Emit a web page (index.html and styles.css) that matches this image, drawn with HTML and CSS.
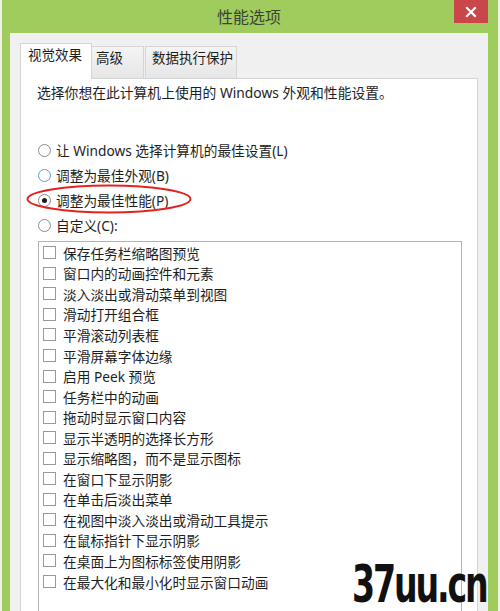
FILE: index.html
```html
<!DOCTYPE html>
<html lang="zh-CN">
<head>
<meta charset="utf-8">
<title>性能选项</title>
<link rel="stylesheet" href="styles.css">
</head>
<body>
<div class="window">
  <div class="titlebar">
    <span class="title">性能选项</span>
    <div class="close">
      <svg width="12" height="12" viewBox="0 0 12 12"><path d="M2 2 L10 10 M10 2 L2 10" stroke="#fff" stroke-width="2.2" stroke-linecap="square"/></svg>
    </div>
  </div>
  <div class="body">
    <div class="tabs">
      <div class="tab active">视觉效果</div>
      <div class="tab t2">高级</div>
      <div class="tab t3">数据执行保护</div>
    </div>
    <div class="panel">
      <p class="desc">选择你想在此计算机上使用的 Windows 外观和性能设置。</p>
      <div class="radios">
        <div class="radio-row"><span class="radio"></span>让 Windows 选择计算机的最佳设置(L)</div>
        <div class="radio-row"><span class="radio hover"></span>调整为最佳外观(B)</div>
        <div class="radio-row"><span class="radio checked"></span>调整为最佳性能(P)</div>
        <div class="radio-row"><span class="radio"></span>自定义(C):</div>
      </div>
      <div class="listbox">
        <div class="item"><span class="check"></span>保存任务栏缩略图预览</div>
        <div class="item"><span class="check"></span>窗口内的动画控件和元素</div>
        <div class="item"><span class="check"></span>淡入淡出或滑动菜单到视图</div>
        <div class="item"><span class="check"></span>滑动打开组合框</div>
        <div class="item"><span class="check"></span>平滑滚动列表框</div>
        <div class="item"><span class="check"></span>平滑屏幕字体边缘</div>
        <div class="item"><span class="check"></span>启用 Peek 预览</div>
        <div class="item"><span class="check"></span>任务栏中的动画</div>
        <div class="item"><span class="check"></span>拖动时显示窗口内容</div>
        <div class="item"><span class="check"></span>显示半透明的选择长方形</div>
        <div class="item"><span class="check"></span>显示缩略图，而不是显示图标</div>
        <div class="item"><span class="check"></span>在窗口下显示阴影</div>
        <div class="item"><span class="check"></span>在单击后淡出菜单</div>
        <div class="item"><span class="check"></span>在视图中淡入淡出或滑动工具提示</div>
        <div class="item"><span class="check"></span>在鼠标指针下显示阴影</div>
        <div class="item"><span class="check"></span>在桌面上为图标标签使用阴影</div>
        <div class="item"><span class="check"></span>在最大化和最小化时显示窗口动画</div>
      </div>
    </div>
  </div>
</div>
<svg class="ellipse" width="170" height="32" viewBox="0 0 170 32"><ellipse cx="84" cy="16" rx="81.5" ry="13.5" fill="none" stroke="#e2231f" stroke-width="2"/></svg>
<div class="watermark">37uu.cn</div>
</body>
</html>
```
FILE: styles.css
```css
html, body {
  margin: 0;
  padding: 0;
}
body {
  width: 500px;
  height: 611px;
  overflow: hidden;
  background: #eef1ea;
  position: relative;
  font-family: "Noto Sans", "Noto Sans CJK SC", sans-serif;
  color: #1e1e1e;
}
.window {
  margin-left: 2px;
  width: 496px;
  height: 611px;
  box-sizing: border-box;
  padding: 0 10px 0 8px;
  background: #9fcc5c;
  position: relative;
}
.titlebar {
  height: 33px;
  display: flex;
  align-items: center;
  justify-content: center;
}
.title {
  font-size: 16px;
  color: #3b4434;
  line-height: 20px;
}
.close {
  position: absolute;
  top: 0;
  right: 10px;
  width: 34px;
  height: 23px;
  background: #c9474a;
  display: flex;
  align-items: center;
  justify-content: center;
}
.body {
  background: #f0f0f0;
  height: 578px;
  box-sizing: border-box;
  padding: 10px 10px 0 10px;
  overflow: hidden;
}
.tabs {
  height: 35px;
  display: flex;
  align-items: flex-end;
}
.tab {
  box-sizing: border-box;
  font-size: 13.5px;
  line-height: 20px;
  border: 1px solid #d5d5d5;
  border-bottom: none;
  white-space: nowrap;
}
.tab.active {
  width: 72px;
  height: 36px;
  margin-bottom: -1px;
  padding: 1px 0 0 7px;
  background: #fff;
  position: relative;
  z-index: 1;
}
.tab.t2, .tab.t3 {
  height: 32px;
  padding-top: 1px;
  background: linear-gradient(#f4f4f4, #e6e6e6);
}
.tab.t2 {
  width: 52px;
  border-left: none;
  padding-left: 4px;
}
.tab.t3 {
  width: 92px;
  margin-left: 1px;
  padding-left: 6px;
}
.panel {
  background: #fff;
  border: 1px solid #d5d5d5;
  height: 600px;
  box-sizing: border-box;
  padding: 4px 15px 0 16px;
}
.desc {
  margin: 0;
  font-size: 13.8px;
  line-height: 20px;
  white-space: nowrap;
}
.radios {
  margin-top: 34.5px;
}
.radio-row {
  height: 25px;
  display: flex;
  align-items: center;
  font-size: 13.7px;
  white-space: nowrap;
}
.radio {
  width: 13px;
  height: 13px;
  box-sizing: border-box;
  border: 1px solid #8c8c8c;
  border-radius: 50%;
  background: #fff;
  margin: 0 5px 0 1px;
  position: relative;
  flex: none;
}
.radio.hover {
  border-color: #5b9fd6;
}
.radio.checked::after {
  content: "";
  position: absolute;
  left: 3px;
  top: 3px;
  width: 5px;
  height: 5px;
  border-radius: 50%;
  background: #1a1a1a;
}
.listbox {
  margin: 3px 0 0 1px;
  border: 1px solid #b4b4b4;
  padding: 1px 0 0 4px;
  height: 420px;
  background: #fff;
}
.item {
  height: 20.56px;
  display: flex;
  align-items: center;
  font-size: 13.7px;
  white-space: nowrap;
}
.check {
  width: 13px;
  height: 13px;
  box-sizing: border-box;
  border: 1px solid #9a9a9a;
  background: #fff;
  margin-right: 7px;
  flex: none;
}
.ellipse {
  position: absolute;
  left: 25px;
  top: 183px;
}
.watermark {
  position: absolute;
  right: 13px;
  top: 559px;
  font-family: "DejaVu Sans Condensed", "DejaVu Sans", sans-serif;
  font-weight: bold;
  font-size: 52px;
  line-height: 50px;
  color: #111;
  letter-spacing: -3px;
  transform: scaleX(0.71);
  transform-origin: right top;
  white-space: nowrap;
}
```
